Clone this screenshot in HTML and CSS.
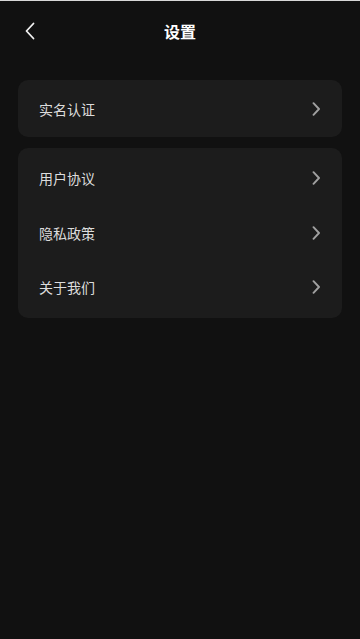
FILE: index.html
```html
<!DOCTYPE html>
<html lang="zh-CN">
<head>
<meta charset="utf-8">
<meta name="viewport" content="width=device-width, initial-scale=1">
<title>设置</title>
<link rel="stylesheet" href="styles.css">
</head>
<body>
<div class="page">
  <header class="nav">
    <button class="back" aria-label="返回">
      <svg width="12" height="18" viewBox="0 0 12 18"><path d="M9.5 1.5 L2.5 9 L9.5 16.5" fill="none" stroke="#f2f2f2" stroke-width="1.8" stroke-linecap="round" stroke-linejoin="round"/></svg>
    </button>
    <h1 class="title">设置</h1>
    <span class="nav-spacer"></span>
  </header>
  <main class="content">
    <section class="card">
      <div class="row"><span class="label">实名认证</span><svg class="chev" width="10" height="14" viewBox="0 0 10 14"><path d="M2.5 1.2 L8 7 L2.5 12.8" fill="none" stroke="#a0a0a0" stroke-width="1.9" stroke-linecap="round" stroke-linejoin="round"/></svg></div>
    </section>
    <section class="card card-list">
      <div class="row"><span class="label">用户协议</span><svg class="chev" width="10" height="14" viewBox="0 0 10 14"><path d="M2.5 1.2 L8 7 L2.5 12.8" fill="none" stroke="#a0a0a0" stroke-width="1.9" stroke-linecap="round" stroke-linejoin="round"/></svg></div>
      <div class="row"><span class="label">隐私政策</span><svg class="chev" width="10" height="14" viewBox="0 0 10 14"><path d="M2.5 1.2 L8 7 L2.5 12.8" fill="none" stroke="#a0a0a0" stroke-width="1.9" stroke-linecap="round" stroke-linejoin="round"/></svg></div>
      <div class="row"><span class="label">关于我们</span><svg class="chev" width="10" height="14" viewBox="0 0 10 14"><path d="M2.5 1.2 L8 7 L2.5 12.8" fill="none" stroke="#a0a0a0" stroke-width="1.9" stroke-linecap="round" stroke-linejoin="round"/></svg></div>
    </section>
  </main>
</div>
</body>
</html>
```
FILE: styles.css
```css
* { box-sizing: border-box; }
html, body {
  margin: 0;
  padding: 0;
  background: #111111;
}
body {
  font-family: "Noto Sans CJK SC", "Noto Sans", sans-serif;
  color: #e0e0e0;
  border-top: 1px solid #d8d8d8;
  min-height: 639px;
}
.page {
  display: flex;
  flex-direction: column;
}
.nav {
  height: 59px;
  display: flex;
  align-items: center;
  padding: 0 18px;
}
.back {
  width: 24px;
  height: 24px;
  padding: 0;
  margin-left: 6px;
  background: none;
  border: none;
  display: flex;
  align-items: center;
  justify-content: flex-start;
}
.title {
  flex: 1;
  margin: 0 0 0 -6px;
  text-align: center;
  font-size: 16px;
  font-weight: 700;
  color: #ffffff;
  line-height: 24px;
}
.nav-spacer { width: 24px; }
.content {
  padding: 20px 18px 0;
  display: flex;
  flex-direction: column;
  gap: 11px;
}
.card {
  background: #1c1c1c;
  border-radius: 10px;
  padding: 1px 0;
}
.card-list { padding: 3px 0; }
.row {
  height: 55px;
  display: flex;
  align-items: center;
  justify-content: space-between;
  padding: 0 21px 0 21px;
}
.card-list .row { height: 54.5px; }
.label {
  font-size: 14px;
  color: #dcdcdc;
  line-height: 20px;
}
.chev { display: block; }
```
